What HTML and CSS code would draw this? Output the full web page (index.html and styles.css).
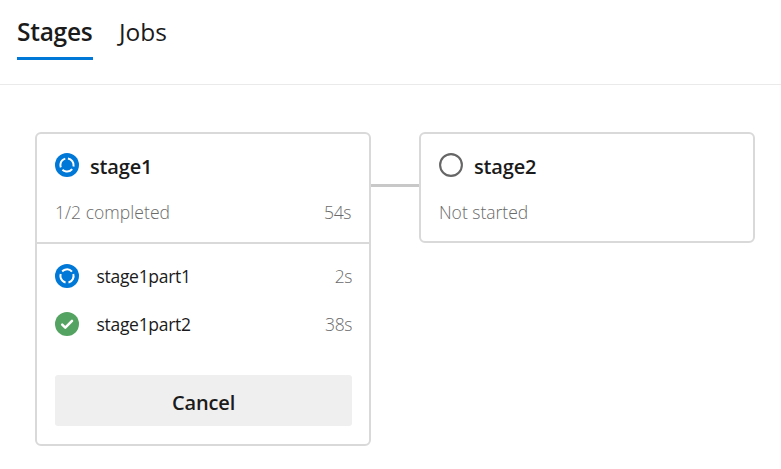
FILE: index.html
```html
<!DOCTYPE html>
<html lang="en">
<head>
<meta charset="utf-8">
<title>Pipeline stages</title>
<link rel="stylesheet" href="styles.css">
</head>
<body>
<svg class="defs" width="0" height="0" aria-hidden="true">
  <symbol id="running" viewBox="0 0 24 24">
    <circle cx="12" cy="12" r="12" fill="#0078d7"/>
    <circle cx="12" cy="12" r="6.6" fill="none" stroke="#fff" stroke-width="2" stroke-dasharray="10.9 2.923" transform="rotate(-82 12 12)"/>
  </symbol>
  <symbol id="running-turned" viewBox="0 0 24 24">
    <circle cx="12" cy="12" r="12" fill="#0078d7"/>
    <circle cx="12" cy="12" r="6.6" fill="none" stroke="#fff" stroke-width="2" stroke-dasharray="10.9 2.923" transform="rotate(-18 12 12)"/>
  </symbol>
  <symbol id="success" viewBox="0 0 24 24">
    <circle cx="12" cy="12" r="12" fill="#55a362"/>
    <path d="M7.2 12.6l3.1 3.1 6.7-6.9" fill="none" stroke="#fff" stroke-width="2.5" stroke-linecap="round" stroke-linejoin="round"/>
  </symbol>
  <symbol id="pending" viewBox="0 0 24 24">
    <circle cx="12" cy="12" r="10.9" fill="none" stroke="#666" stroke-width="2.1"/>
  </symbol>
</svg>
<nav class="tabs">
  <a class="tab active"><span>Stages</span></a>
  <a class="tab"><span>Jobs</span></a>
</nav>
<main class="graph">
  <section class="card">
    <div class="summary">
      <div class="title"><svg class="icon"><use href="#running"/></svg><h2>stage1</h2></div>
      <div class="meta"><span class="status">1/2 completed</span><span class="time">54s</span></div>
    </div>
    <div class="jobs">
      <div class="job"><svg class="icon"><use href="#running-turned"/></svg><span class="name">stage1part1</span><span class="time">2s</span></div>
      <div class="job"><svg class="icon"><use href="#success"/></svg><span class="name">stage1part2</span><span class="time">38s</span></div>
      <button class="cancel">Cancel</button>
    </div>
  </section>
  <div class="connector"></div>
  <section class="card">
    <div class="summary">
      <div class="title"><svg class="icon"><use href="#pending"/></svg><h2>stage2</h2></div>
      <div class="meta"><span class="waiting">Not started</span></div>
    </div>
  </section>
</main>
</body>
</html>
```
FILE: styles.css
```css
* { box-sizing: border-box; }
body {
  margin: 0;
  background: #fff;
  color: #1b1b1b;
  font-family: "Open Sans", "Noto Sans", sans-serif;
  overflow: hidden;
}
.defs { display: block; }
.tabs {
  display: flex;
  gap: 26px;
  height: 85px;
  padding-left: 17px;
  border-bottom: 1px solid #eaeaea;
}
.tab {
  height: 60px;
  padding-top: 14px;
  font-size: 24.5px;
  font-weight: 400;
  line-height: 36px;
  letter-spacing: 0;
  white-space: nowrap;
}
.tab.active {
  width: 76px;
  border-bottom: 3px solid #0078d7;
  font-weight: 600;
  letter-spacing: -0.25px;
}
.graph {
  display: flex;
  align-items: flex-start;
  padding: 47px 0 0 35px;
}
.card {
  width: 336px;
  border: 2px solid #d9d9d9;
  border-radius: 6px;
}
.summary { height: 107px; padding: 19px 18px 0; }
.title { display: flex; gap: 11px; height: 47px; }
.icon { flex: none; width: 24px; height: 24px; }
h2 {
  margin: 0;
  font-size: 20px;
  font-weight: 600;
  line-height: 28px;
  letter-spacing: -0.15px;
}
.meta, .job {
  display: flex;
  font-size: 17.5px;
  line-height: 24px;
}
.meta { color: #6a6a6a; font-weight: 300; }
.status { letter-spacing: 0.05px; }
.time { margin-left: auto; color: #6a6a6a; font-weight: 300; letter-spacing: -0.4px; }
.jobs {
  height: 202px;
  margin-top: 1px;
  padding: 20px 17px 0 18px;
  border-top: 2px solid #d9d9d9;
}
.job { height: 48px; }
.name { margin-left: 17.5px; font-weight: 400; letter-spacing: -0.3px; }
.cancel {
  display: block;
  width: 297px;
  height: 51px;
  margin-top: 15px;
  padding: 3px 0 0;
  border: 0;
  border-radius: 3px;
  background: #efefef;
  color: #1b1b1b;
  font: 600 20px "Open Sans", sans-serif;
  letter-spacing: -0.15px;
}
.connector {
  width: 48px;
  height: 3px;
  margin-top: 52px;
  background: #c8c8c8;
}
```
